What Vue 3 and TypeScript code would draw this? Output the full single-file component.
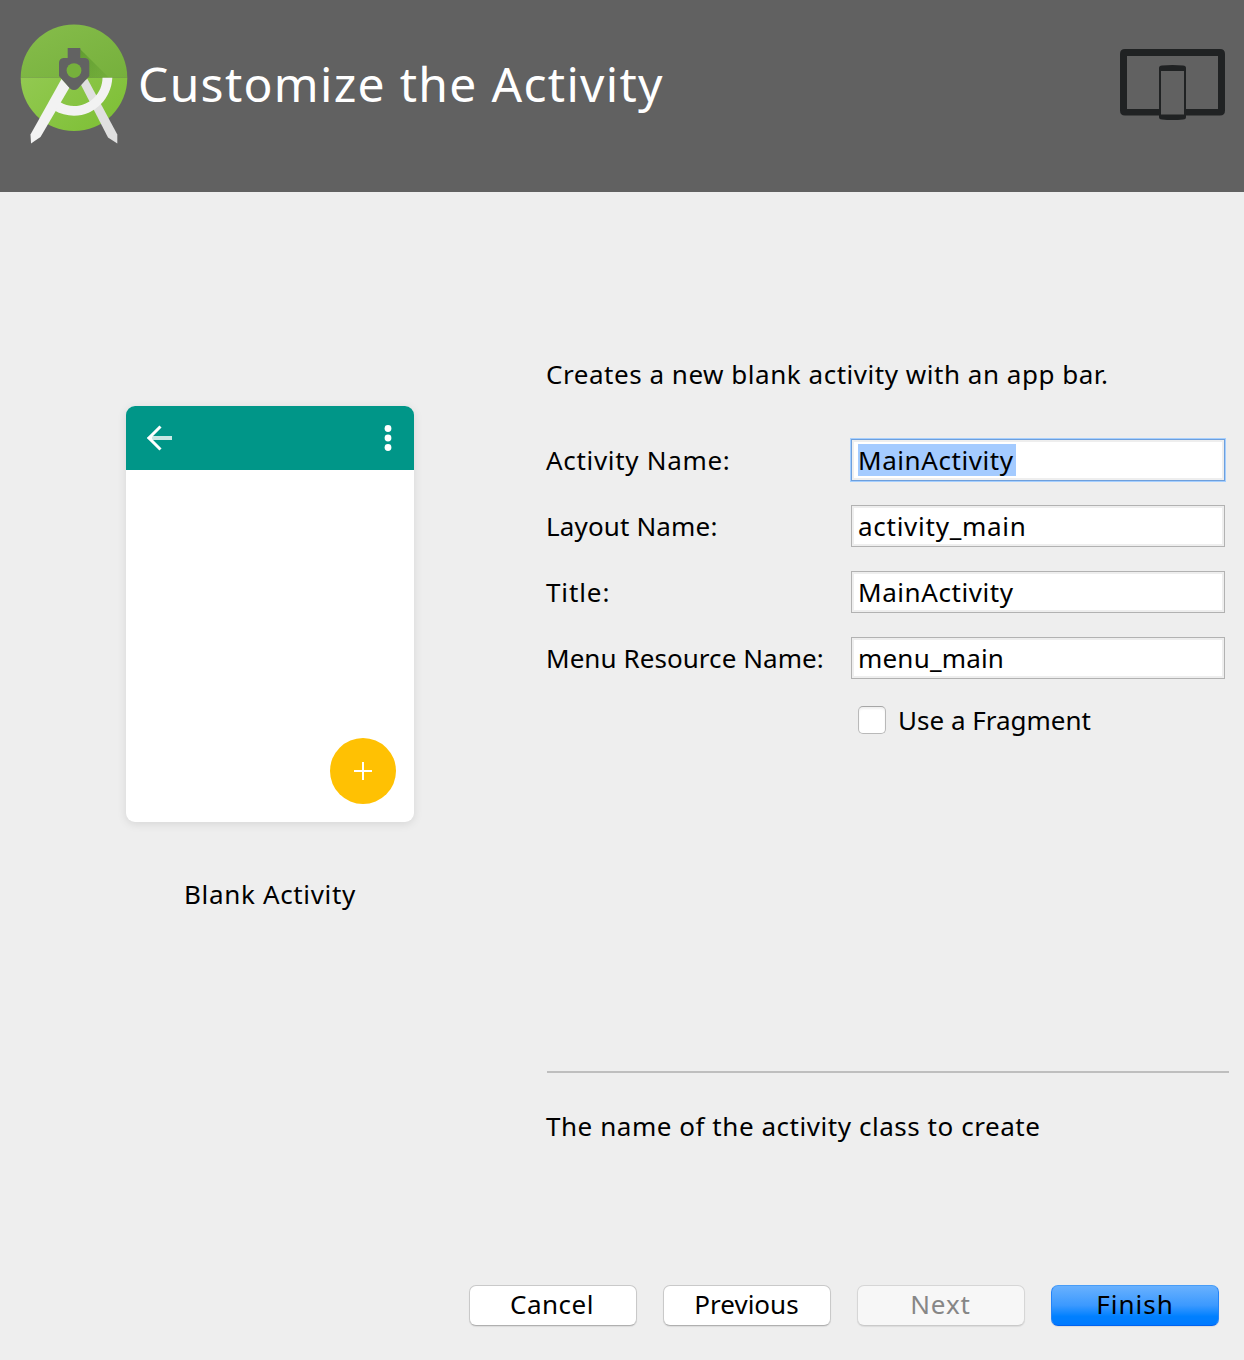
<script setup lang="ts">
interface Field {
  id: string
  label: string
  value: string
  focused?: boolean
}

const fields: Field[] = [
  { id: 'activity', label: 'Activity Name:', value: 'MainActivity', focused: true },
  { id: 'layout', label: 'Layout Name:', value: 'activity_main' },
  { id: 'title', label: 'Title:', value: 'MainActivity' },
  { id: 'menu', label: 'Menu Resource Name:', value: 'menu_main' },
]
</script>

<template>
  <div class="wizard">
    <header class="banner">
      <svg class="logo" width="128" height="150" viewBox="0 0 128 150">
        <defs>
          <linearGradient id="disc-top" x1="0" y1="0" x2="1" y2="1">
            <stop offset="0" stop-color="#86bd4b" />
            <stop offset="1" stop-color="#76b03c" />
          </linearGradient>
          <linearGradient id="disc-low" x1="0" y1="0" x2="1" y2="0.6">
            <stop offset="0" stop-color="#92c951" />
            <stop offset="1" stop-color="#7fc037" />
          </linearGradient>
          <linearGradient id="fade" x1="0" y1="0" x2="1" y2="1">
            <stop offset="0" stop-color="#4d8a25" stop-opacity="0.6" />
            <stop offset="1" stop-color="#5d9a2c" stop-opacity="0.2" />
          </linearGradient>
        </defs>
        <path d="M20.700 77.700a53.300 53.300 0 0 1 106.600 0z" fill="url(#disc-top)" />
        <path d="M20.700 77.700a53.300 53.300 0 0 0 106.600 0z" fill="url(#disc-low)" />
        <path d="M80 49L109 77.700H86L80.300 66z" fill="url(#fade)" />
        <path d="M79.500 82L87.500 79L117.300 134.500V143.500L108 137.500z" fill="#e0e0e0" />
        <path d="M61.500 79L69.500 87.500L40.500 137L31 143.500L30.500 134.500z" fill="#f2f2f2" />
        <path d="M102.500 77.700H112.300C111.500 98 95 115.700 74 115.700C67 115.700 60 113.700 54.500 110.500L60 102C64 104.500 69 106 74 106C90 106 102.500 93 102.500 77.700z" fill="#f2f2f2" />
        <path d="M67.700 48H80.300V58H85Q89.300 58.500 89.300 63V76L78 88.500Q74 91.500 70 88.500L59 76V63Q59 58.500 63.500 58H67.700z" fill="#626262" />
        <circle cx="74" cy="70.600" r="7.400" fill="#76b03c" />
      </svg>
      <h1>Customize the Activity</h1>
      <svg class="devices" width="106" height="72" viewBox="0 0 106 72">
        <path fill-rule="evenodd" d="M5 0H100Q105 0 105 5V61.500Q105 66.500 100 66.500H5Q0 66.500 0 61.500V5Q0 0 5 0zM7 7V60H98V7z" fill="#202223" />
        <path d="M39 19Q39 16.500 42 16.500Q52.500 15.500 63 16.500Q66 16.500 66 19V68Q66 70.500 63 70.500Q52.500 71.500 42 70.500Q39 70.500 39 68z" fill="#202223" />
        <path d="M41 22H64V65.500H41z" fill="#616161" />
      </svg>
    </header>

    <main class="content">
      <section class="preview">
        <div class="phone">
          <div class="appbar">
            <svg width="28" height="26" viewBox="0 0 28 26" fill="none">
              <path d="M6 13H26" stroke="#c8e8e4" stroke-width="4" />
              <path d="M14.500 1.500L3 13L14.500 24.500" stroke="#fff" stroke-width="3" />
              <path d="M1 13L6 9V17z" fill="#fff" />
            </svg>
            <svg width="8" height="28" viewBox="0 0 8 28" fill="#fff">
              <circle cx="4" cy="4.500" r="3.400" /><circle cx="4" cy="14" r="3.400" /><circle cx="4" cy="23.500" r="3.400" />
            </svg>
          </div>
          <div class="fab">
            <svg width="18" height="18" viewBox="0 0 18 18"><path d="M0 9H18M9 0V18" stroke="#fff" stroke-width="2" /></svg>
          </div>
        </div>
        <p class="caption">Blank Activity</p>
      </section>

      <section class="form">
        <p class="intro">Creates a new blank activity with an app bar.</p>
        <div v-for="f in fields" :key="f.id" :class="['row', f.id]">
          <label class="label">{{ f.label }}</label>
          <div :class="['input', { focused: f.focused }]"><span>{{ f.value }}</span></div>
        </div>
        <div class="check"><span class="box"></span><span>Use a Fragment</span></div>
        <hr />
        <p class="help">The name of the activity class to create</p>
      </section>
    </main>

    <footer class="buttons">
      <button class="cancel">Cancel</button>
      <button class="previous">Previous</button>
      <button class="next" disabled>Next</button>
      <button class="finish">Finish</button>
    </footer>
  </div>
</template>

<style>
body { margin: 0; }
</style>

<style scoped>
.wizard { width: 1244px; height: 1360px; background: #eee; color: #000; font: 26px/32px "Noto Sans", "Open Sans", sans-serif; display: flex; flex-direction: column; overflow: hidden; }
.wizard * { box-sizing: border-box; }
p, h1 { margin: 0; white-space: nowrap; }
.banner { height: 192px; flex: none; background: #616161; display: flex; align-items: flex-start; }
.logo { flex: none; }
h1 { font-size: 48px; font-weight: 400; line-height: 60px; letter-spacing: 1.3px; color: #fff; margin: 54px 0 0 10px; }
.devices { margin: 49px 18px 0 auto; }
.content { flex: 1; display: flex; }
.preview { width: 540px; padding-top: 214px; display: flex; flex-direction: column; align-items: center; }
.phone { width: 288px; height: 416px; border-radius: 9px; background: #fff; overflow: hidden; box-shadow: 0 2px 10px rgba(0, 0, 0, .1); display: flex; flex-direction: column; justify-content: space-between; align-items: flex-end; }
.appbar { width: 100%; height: 64px; background: #009688; display: flex; justify-content: space-between; align-items: center; padding: 0 22px 0 20px; }
.fab { width: 66px; height: 66px; border-radius: 50%; background: #ffc107; background: #ffc103; margin: 0 18px 18px 0; display: flex; align-items: center; justify-content: center; }
.caption { margin-top: 56px; letter-spacing: .66px; }
.form { width: 704px; padding: 166px 15px 0 6px; }
.intro { margin-bottom: 49px; letter-spacing: .53px; }
.row { display: flex; height: 42px; margin-bottom: 24px; }
.label { width: 305px; padding-top: 5px; white-space: nowrap; }
.activity .label { letter-spacing: .69px; }
.layout .label { letter-spacing: .15px; }
.title .label { letter-spacing: .9px; }
.menu .label { letter-spacing: .06px; }
.input { width: 374px; border: 1px solid #b2b2b2; box-shadow: inset 0 0 0 2px #eee; background: #fff; padding: 4px 6px; white-space: nowrap; letter-spacing: .58px; }
.layout .input { letter-spacing: .74px; }
.menu .input { letter-spacing: .2px; }
.input span { display: block; width: max-content; height: 32px; }
.input.focused { border-color: #6e9fdc; box-shadow: inset 0 0 0 2px #eee, 0 0 0 1px #a5cfff; }
.focused span { width: 158px; background: #a4cbff; }
.check { display: flex; margin: 27px 0 0 312px; }
.box { width: 28px; height: 28px; border: 1px solid #b9b9b9; border-top-color: #a6a6a6; border-radius: 5px; background: #fff; box-shadow: inset 0 2px 2px #f0f0f0; margin: 0 12px 0 0; }
.check span + span { margin-top: -2px; }
hr { width: 682px; height: 2px; border: 0; background: #bebebe; margin: 335px 0 0 1px; }
.help { margin-top: 37px; letter-spacing: .55px; }
.buttons { height: 75px; flex: none; display: flex; gap: 26px; justify-content: flex-end; padding-right: 25px; }
button { width: 168px; height: 41px; padding: 0 0 4px; font: inherit; color: #000; background: #fff; border: 1px solid #c9c9c9; border-bottom-color: #b0b0b0; border-radius: 7px; box-shadow: 0 1px 1px rgba(0, 0, 0, .08); }
.cancel { letter-spacing: .5px; padding-right: 2px; }
.previous { padding-right: 1px; }
.next { letter-spacing: .9px; padding-right: 1px; color: #868686; background: #f7f7f7; border-color: #d6d6d6 #d6d6d6 #cacaca; }
.finish { letter-spacing: 1px; background: linear-gradient(#69b1fe, #3b99ff 50%, #0080ff 78%, #007aff); border-color: #489df7 #2483f8 #0062f0; }
</style>
